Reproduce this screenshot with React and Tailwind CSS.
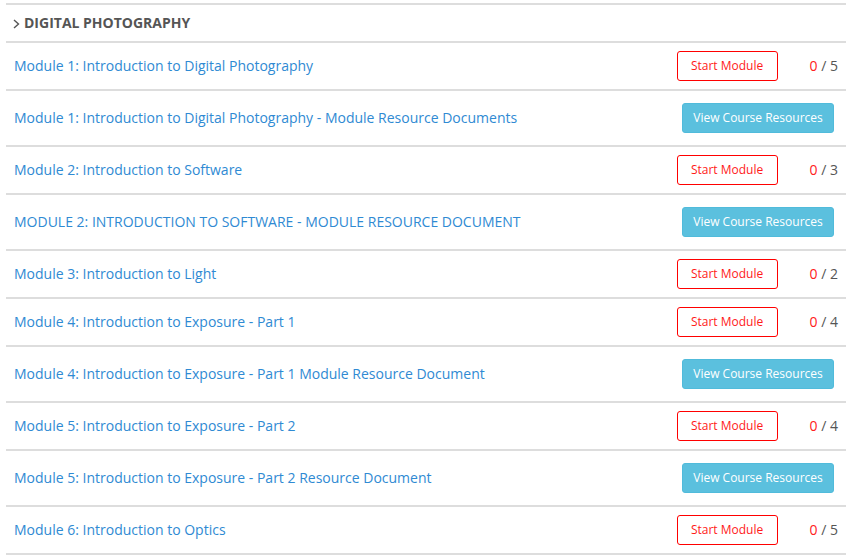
const modules = [
  { title: "Module 1: Introduction to Digital Photography", type: "start", total: 5 },
  { title: "Module 1: Introduction to Digital Photography - Module Resource Documents", type: "res" },
  { title: "Module 2: Introduction to Software", type: "start", total: 3 },
  { title: "MODULE 2: INTRODUCTION TO SOFTWARE - MODULE RESOURCE DOCUMENT", type: "res" },
  { title: "Module 3: Introduction to Light", type: "start", total: 2 },
  { title: "Module 4: Introduction to Exposure - Part 1", type: "start", total: 4 },
  { title: "Module 4: Introduction to Exposure - Part 1 Module Resource Document", type: "res" },
  { title: "Module 5: Introduction to Exposure - Part 2", type: "start", total: 4 },
  { title: "Module 5: Introduction to Exposure - Part 2 Resource Document", type: "res" },
  { title: "Module 6: Introduction to Optics", type: "start", total: 5 },
]

export default function App() {
  return (
    <div
      className="bg-white w-[850px] h-[559px] overflow-hidden px-[6px] pt-[3px]"
      style={{ fontFamily: '"Open Sans", sans-serif' }}
    >
      <div className="w-[840px]">
        {/* Section header */}
        <div className="h-[38px] border-t-2 border-[#dddddd] flex items-center pl-[7px] text-[#555555]">
          <svg width="7" height="10" viewBox="0 0 7 10" className="mr-[4px] mt-[1px]">
            <path d="M1 1 L5.5 5 L1 9" fill="none" stroke="#555" strokeWidth="1.4" />
          </svg>
          <span className="text-[14px] font-bold leading-[18px] mb-[1px]">DIGITAL PHOTOGRAPHY</span>
        </div>

        {modules.map((m, i) => (
          <div
            key={i}
            className={
              "border-t-2 border-[#dddddd] flex items-center pl-[8px] " +
              (m.type === "start" ? "h-[48px] pr-[8px]" : "h-[56px] pr-[12px]")
            }
          >
            <a className="flex-1 text-[14px] leading-[20px] mb-[1px] text-[#2f8ad3] cursor-pointer">{m.title}</a>
            {m.type === "start" ? (
              <div className="flex items-center">
                <button className="w-[101px] h-[30px] border border-[#ff0000] rounded-[3px] text-[12px] text-[#ff1a1a] bg-white">
                  Start Module
                </button>
                <span className="ml-[32px] mb-[1px] text-[14px] text-[#555555]">
                  <span className="text-[#ff2020]">0</span> / {m.total}
                </span>
              </div>
            ) : (
              <button className="w-[152px] h-[30px] rounded-[3px] bg-[#5bc0de] border border-[#50bbdb] text-[12px] text-white">
                View Course Resources
              </button>
            )}
          </div>
        ))}
        <div className="border-t-2 border-[#dddddd]" />
      </div>
    </div>
  )
}
